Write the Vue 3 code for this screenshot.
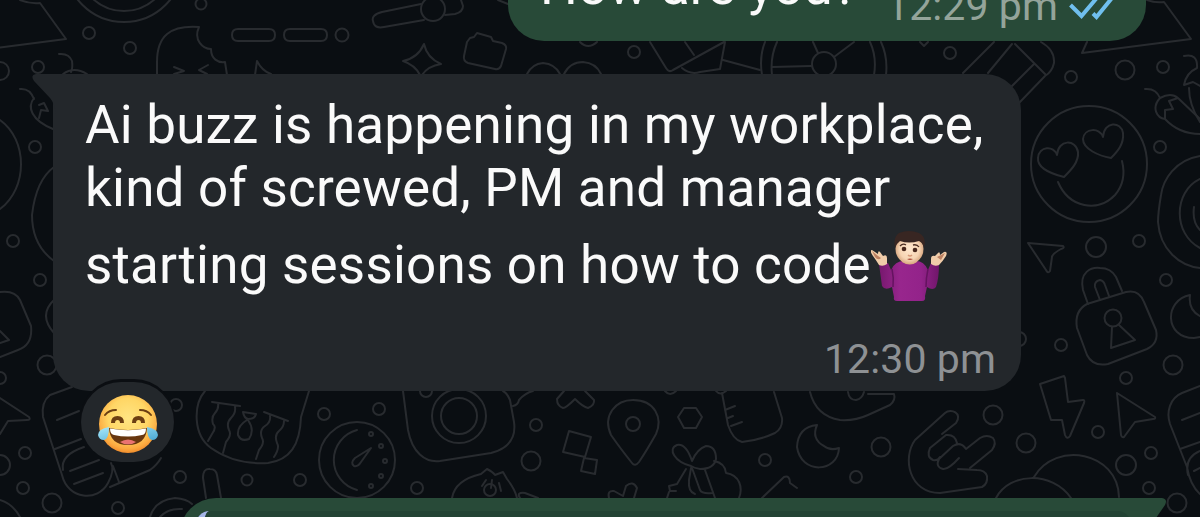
<script setup>
const messageLines = [
  { text: 'Ai buzz is happening in my workplace,', cls: 'line-1' },
  { text: 'kind of screwed, PM and manager', cls: 'line-2' },
  { text: 'starting sessions on how to code', cls: 'line-3', shrug: true }
]

// wallpaper bubbles: x, y, radius
const dots = [
  [201, 4, 5.5], [89, 33, 6], [130, 48, 6], [38, 67, 6], [0, 71, 9], [342, 35, 6.5],
  [433, 9, 12], [634, 52, 6], [824, 64, 12], [950, 53, 6], [1071, 77, 6], [1125, 70, 9.5],
  [1163, 67, 6], [1160, 147, 6], [1096, 247, 10], [1139, 241, 6], [1166, 280, 6],
  [1061, 345, 6], [1173, 365, 9.5], [1126, 378, 6], [1019, 339, 7], [993, 415, 9.5],
  [1026, 443, 9.5], [881, 447, 9.5], [856, 477, 6], [1098, 432, 6], [1126, 465, 10],
  [1151, 453, 6], [1149, 488, 6], [1177, 503, 9.5], [426, 391, 6], [536, 425, 6],
  [531, 461, 9.5], [490, 490, 6], [417, 488, 6], [765, 460, 6], [25, 453, 6],
  [0, 465, 10], [23, 488, 6], [52, 503, 9.5], [118, 508, 6], [180, 477, 6],
  [247, 480, 5.5], [300, 480, 6], [324, 414, 6], [379, 409, 6], [176, 405, 6],
  [0, 378, 6], [47, 365, 9.5], [35, 147, 6], [13, 241, 6], [40, 280, 6],
  [124, -37, 59], [124, -35, 46], [1089, 164, 58], [1113, 318, 8.5],
  [459, 416, 27], [459, 416, 18], [633, 424, 7], [357, 460, 38],
  [371, 434, 2], [381, 446, 2], [385, 461, 2], [381, 476, 2], [371, 486, 2]
]

const doodles = [
  // top strip
  'M20 0Q30 4 40 3L66 39L0 47.5',
  'M59 54Q69 53 72 61Q73 68 71 72M63 74Q74 66 87 74',
  'M20 89Q30 88 34 99M34 98C27 107 31 120 53 129M39 118L41 110L48 111L44 103L39 105',
  'M157 75V62C157 36 170 25 199 27C193 40 203 49 211 49C211 59 218 63 225 62L227 75',
  'M174 67L184 71L174 74M208 65L199 70L207 74',
  'M238 29H269Q275 29 275 35T269 41H238Q232 41 232 35T238 29ZM290 29H321Q327 29 327 35T321 41H290Q284 41 284 35T290 29Z',
  'M255 75L257 61Q262 71 271 74',
  'M421 4L382 12Q371 15 373 21Q374 29 384 27L424 20M445 15L455 14Q463 12 463 6L461 0M498 0L508 4',
  'M424 44Q427 58 441 64Q428 66 422 75M424 44Q418 58 403 61Q415 65 420 75',
  'M470 38L474 37L477 33L491 37L493 41L502 43Q507 45 506 49L501 66Q499 70 495 69L468 63Q463 61 464 56L467 42Z',
  'M527 74Q532 64 543 63Q555 64 560 74M564 74Q570 62 583 62Q596 63 601 74M580 42Q588 50 597 42',
  'M650 42L666 68Q669 73 673 70L724 42M685 42L694 55M682 68Q690 75 700 72L720 69L725 42M723 60L760 70',
  'M765 42Q759 57 762 75M777 42Q770 57 772 75M772 67L811 66M813 42L818 53M834 57L854 42M870 42Q877 57 874 75M881 42Q888 57 886 75',
  'M920 42L924 46L928 42M994 42L963 73M1012 44L988 73M1015 44L1045 74M1034 64L1011 87M1041 42Q1055 50 1054 63Q1052 72 1045 76L1020 102',
  'M1087 42L1082 53L1191 39L1164 2Q1155 3 1147 0',
  // right side
  'M1184 56Q1198 53 1197 68Q1186 73 1184 85L1193 82L1200 86M1189 88Q1189 105 1200 122',
  'M1145 89Q1156 88 1160 98C1151 108 1157 118 1165 119L1165 110L1173 109L1169 101L1178 98Q1171 92 1160 98M1165 119Q1179 134 1200 134M1178 98L1200 119',
  'M1064 177C1052 174 1037 169 1038 158C1039 146 1054 145 1057 155C1058 139 1076 139 1078 152C1079 162 1071 170 1064 177Z',
  'M1111 158C1099 156 1083 149 1083 139C1084 128 1100 127 1103 137C1104 121 1121 121 1123 133C1124 144 1118 151 1111 158Z',
  'M1058 182C1069 208 1098 213 1115 195Q1127 181 1122 161',
  'M1028 243L1063 246Q1065 248 1061 249Q1052 254 1052 257L1050 271Q1048 274 1046 270Z',
  'M1200 156C1175 160 1163 180 1161 195Q1158 213 1158 222C1160 250 1180 266 1200 268M1200 179C1173 192 1173 234 1200 248M1194 207Q1192 222 1200 230',
  'M1087 304L1126 292Q1139 289 1144 302L1156 330Q1159 343 1147 349L1108 364Q1093 367 1087 355L1077 328Q1074 311 1087 304Z',
  'M1088 304L1083 290C1079 272 1091 267 1100 268Q1111 268 1116 277L1122 291M1100 300L1095 287Q1094 281 1100 280Q1104 281 1105 285L1109 296',
  'M1112 327L1111 348L1135 340L1119 325',
  'M1190 295C1164 300 1164 338 1194 338L1200 337M1190 295Q1188 310 1200 316',
  'M1040 384L1064 376L1065 378L1068 402L1083 400Q1085 400 1084 403L1070 436Q1067 440 1065 435L1062 420L1051 420Z',
  'M1117 393L1155 417Q1156 419 1153 419L1135 422L1124 437Q1122 438 1121 435Z',
  'M1200 386L1182 393C1170 398 1166 412 1170 424L1187 467Q1190 485 1200 494M1182 420L1200 413M1180 449L1200 442M1200 451Q1184 458 1188 475M1194 471L1200 468',
  // bottom strip, right to left
  'M942 434L956 423C963 413 951 408 945 413L915 440C902 458 909 493 940 493L982 487Q988 484 987 476Q985 470 977 470L958 469',
  'M970 468L992 450Q997 443 993 438Q987 434 980 438L966 449Q961 441 953 446L939 459Q935 467 943 469Q948 470 959 458M957 443Q955 434 946 435L930 448Q926 457 933 460Q938 461 940 457',
  'M996 498C1010 472 1052 471 1071 498M1034 477C1056 440 1118 452 1119 497',
  'M817 425Q798 427 797 447C801 475 838 473 839 448Q830 451 824 446Q811 439 817 425Z',
  'M810 392Q816 416 840 420Q855 421 868 415L890 405Q896 400 894 394L868 394M848 392Q849 400 856 400Q862 399 864 392',
  'M762 498L784 477Q790 475 790 483L797 488M665 391Q670 397 676 391',
  'M722 393L728 425Q733 440 742 442Q760 440 775 433Q783 428 782 418L774 392M725 410L735 406M728 418L733 416M731 426L742 422M716 391Q720 396 726 391',
  'M678 417L684 408L696 408L702 417L696 428L684 428Z',
  'M691 466C675 462 667 449 677 445Q686 443 692 461Q697 449 706 446Q716 446 716 459Q714 469 700 469Q694 468 691 466',
  'M691 468L689 480Q688 492 695 494M705 470L715 498M692 468L700 490Q702 494 712 493M714 461Q725 463 726 473C740 475 743 488 739 498M686 469L677 484L669 486L670 491H676M669 492L667 498',
  'M632 463Q620 448 611 435C602 415 616 400 633 400C655 400 663 418 656 434Q647 450 639 462Q635 467 632 463Z',
  'M569 431L591 437L585 457L563 452ZM584 458L597 460L595 474L581 471Z',
  'M564 391L557 399Q557 406 563 408Q566 408 575 399Q583 407 588 408Q595 405 594 400L585 391',
  'M609 498Q607 490 614 491L623 496L626 486Q633 480 637 488L634 498',
  'M452 498Q455 480 481 474L487 469Q493 472 495 475L503 472L507 479Q515 489 517 498M486 480L482 486M492 480L491 488M499 483L501 491M520 498Q516 492 525 493L538 498',
  'M403 391L408 430C412 452 425 463 440 461L491 453C510 448 516 436 514 422L510 400Q507 393 503 391M513 406Q518 405 519 400Q525 393 533 391',
  'M357 430A31 31 0 0 0 357 490M371 448L355 458Q350 463 354 466Q358 467 361 462Z',
  'M205 391C193 405 193 435 211 448Q235 465 268 463C290 460 300 445 301 417L309 391',
  'M212 402L240 406M218 403Q219 409 215 413T213 424Q217 427 212 434L208 441M235 407Q236 413 231 418T229 430Q232 435 226 442L223 453M264 412L288 421M270 416Q271 422 265 426T262 438Q265 443 259 450L256 459M284 421Q284 427 279 431T277 443Q280 448 274 457',
  'M243 412L256 414Q255 419 248 419Q244 418 243 412ZM247 420Q237 426 238 435Q241 442 249 439Q255 430 248 420',
  'M206 498L203 478Q203 468 210 469Q216 469 217 475L221 498M150 517Q155 500 175 498Q187 499 192 504M160 517Q168 508 182 509',
  'M72 387L50 395Q41 402 43 417L62 475C68 500 98 502 108 483Q115 470 111 463M110 487L150 470Q157 465 161 458M57 420L79 411M55 449L81 439M70 471L99 460M74 484L103 473M63 470Q60 455 84 447M113 466L119 482',
  'M0 398L29 417Q31 420 27 420L8 421L0 434M0 500Q13 504 20 517',
  // left side
  'M0 120C28 140 28 188 0 209M54 167Q36 180 32 215Q32 245 54 261M54 300Q38 315 54 333',
  'M0 292Q15 290 20 300L31 326Q33 345 18 350L0 357M0 331L9 340L0 343'
]
</script>

<template>
  <div class="chat">
    <svg class="wallpaper" viewBox="0 0 1200 517">
      <circle v-for="(d, i) in dots" :key="'c' + i" :cx="d[0]" :cy="d[1]" :r="d[2]" />
      <path v-for="(p, i) in doodles" :key="'p' + i" :d="p" />
    </svg>

    <div class="bubble sent first">
      <span class="sent-text">How are you?</span>
      <span class="time sent-time">12:29 pm</span>
      <svg class="ticks" viewBox="0 0 46 30">
        <path d="M2.5 15L13.5 26L33 3M25 23.500L28.500 27L48 3" />
      </svg>
    </div>

    <div class="bubble received">
      <svg class="tail" viewBox="0 0 24 40">
        <path d="M4 0H24V40Q23 30 18 24L2 7Q-2 1 4 0Z" />
      </svg>
      <p v-for="line in messageLines" :key="line.cls" class="line" :class="line.cls">
        <span>{{ line.text }}</span>
        <svg v-if="line.shrug" class="shrug" viewBox="0 0 76 76">
          <defs>
            <linearGradient id="shirt" x1="0" x2="1">
              <stop offset="0" stop-color="#76186d" />
              <stop offset=".35" stop-color="#98268d" />
              <stop offset=".7" stop-color="#93238a" />
              <stop offset="1" stop-color="#70166a" />
            </linearGradient>
            <radialGradient id="skin">
              <stop offset="0" stop-color="#ffe7cd" />
              <stop offset=".7" stop-color="#f6d4b3" />
              <stop offset="1" stop-color="#d9aa84" />
            </radialGradient>
          </defs>
          <path d="M8 34L17 33L20 40Q24 31 33 31H45Q53 31 57 40L60 33L68 34Q68 48 65 57Q62 61 56 57L54 66Q55 71 51 71H26Q22 71 23 67L21 57Q14 61 11 56Z" fill="url(#shirt)" />
          <path d="M21 39Q23 48 22 57M57 39Q55 48 55 57" fill="none" stroke="#651360" stroke-width="1.500" />
          <path d="M31 27H46V32Q39 37 31 32Z" fill="#dca982" />
          <path d="M8 35Q5 30 2 26Q-2 20 1 20L7 24Q7 20 9 22L12 26Q16 24 16 28L16 34Q12 37 8 35Z" fill="#f0cca9" />
          <path d="M68 35Q72 31 75 26Q77 21 73 22L69 25Q69 21 67 23L64 26Q60 25 60 29L60 34Q64 37 68 35Z" fill="#f0cca9" />
          <path d="M1 21L7 26L10 28Q7 31 4 27ZM66 27L74 23L70 30Z" fill="#bb8062" />
          <ellipse cx="38.500" cy="19" rx="14" ry="15" fill="url(#skin)" />
          <path d="M24 18Q22 7 28 3Q38-1 48 3Q56 7 53 18Q52 13 48 11Q38 14 29 11Q26 13 24 18Z" fill="#382622" />
          <circle cx="33" cy="19" r="2.300" fill="#49281d" />
          <circle cx="44" cy="20" r="2.300" fill="#49281d" />
          <path d="M29 16Q32 13 35 15M42 15Q46 14 48 17" fill="none" stroke="#4b2d22" stroke-width="1.300" />
          <path d="M37 25Q39 27 41 25" fill="none" stroke="#d79b79" stroke-width="1.500" />
          <path d="M36 29Q39 28 42 29Q39 31 36 29Z" fill="#a94b3c" />
        </svg>
      </p>
      <div class="meta"><span class="time">12:30 pm</span></div>

      <div class="reaction">
        <svg class="joy" viewBox="0 0 60 60">
          <defs>
            <radialGradient id="face" cx=".5" cy=".4" r=".62">
              <stop offset="0" stop-color="#ffe583" />
              <stop offset=".55" stop-color="#ffd665" />
              <stop offset=".85" stop-color="#fba940" />
              <stop offset="1" stop-color="#ee8527" />
            </radialGradient>
            <linearGradient id="tear" x1="0" y1="0" x2="1" y2="1">
              <stop offset="0" stop-color="#a8e8fb" />
              <stop offset="1" stop-color="#4ba9d3" />
            </linearGradient>
          </defs>
          <circle cx="30" cy="30" r="29" fill="url(#face)" />
          <g fill="none" stroke="#6b3e12" stroke-linecap="round">
            <path d="M7 21Q11 16 18 16M42 16Q49 16 53 21" stroke-width="2" />
            <path d="M15 29Q15 24 19.500 24Q24 24 24 29M36 29Q36 24 40.500 24Q45 24 45 29" stroke-width="4" stroke-linecap="butt" />
          </g>
          <path d="M11 34Q30 38 49 34Q48 51 30 51Q12 51 11 34Z" fill="#67360f" />
          <path d="M12 34.500Q30 38 48 34.500Q48 41 44 41Q30 44 16 41Q12 40 12 34.500Z" fill="#fff" />
          <path d="M22 48Q30 43 38 48Q30 53 22 48Z" fill="#ea7371" />
          <path d="M11 33Q0 35 0 41Q1 46 6 46Q11 45 11 33ZM49 33Q60 35 60 41Q59 46 54 46Q49 45 49 33Z" fill="url(#tear)" />
        </svg>
      </div>
    </div>

    <div class="bubble sent last">
      <div class="quote"></div>
      <svg class="tail tail-right" viewBox="0 0 24 20">
        <path d="M0 0H18Q24 1 21 7L12 20H0Z" />
      </svg>
    </div>
  </div>
</template>

<style>
body {
  margin: 0;
  background: #0a0e12;
}
</style>

<style scoped>
.chat {
  position: relative;
  display: flex;
  flex-direction: column;
  box-sizing: border-box;
  width: 1200px;
  height: 517px;
  overflow: hidden;
  background: #0a0e12;
  color: #fafafa;
  font-family: Roboto, "Noto Sans", sans-serif;
}

.wallpaper {
  position: absolute;
  inset: 0;
  width: 1200px;
  height: 517px;
  fill: none;
  stroke: #282b2f;
  stroke-width: 2;
  stroke-linejoin: round;
  stroke-linecap: round;
}

.bubble {
  position: relative;
  box-sizing: border-box;
  flex-shrink: 0;
}

.sent {
  background: #284a38;
}

.first {
  display: flex;
  align-items: flex-end;
  width: 638px;
  height: 41px;
  margin-left: 508px;
  padding-left: 32px;
  border-radius: 0 0 36px 36px;
}

.sent-text {
  width: 346px;
  flex-shrink: 0;
  font-size: 53px;
  line-height: 60px;
  margin-bottom: 25px;
  letter-spacing: 0;
  white-space: nowrap;
}

.time {
  color: #8e9194;
  font-size: 41px;
  line-height: 48px;
  letter-spacing: 0.1px;
  white-space: nowrap;
}

.sent-time {
  width: 182px;
  flex-shrink: 0;
  margin-bottom: 11px;
  color: #94a49a;
}

.ticks {
  flex-shrink: 0;
  width: 46px;
  height: 30px;
  margin-bottom: 21px;
  fill: none;
  stroke: #70bfee;
  stroke-width: 4;
}

.received {
  width: 968px;
  height: 317px;
  margin: 33px 0 0 53px;
  padding: 20px 25px 0 32px;
  border-radius: 0 36px 36px 36px;
  background: #23272b;
}

.tail {
  position: absolute;
  top: 0;
  left: -21px;
  width: 24px;
  height: 40px;
  fill: #23272b;
}

.line {
  display: flex;
  align-items: center;
  margin: 0;
  height: 63px;
  font-size: 53px;
  line-height: 63px;
  letter-spacing: 0.2px;
  white-space: nowrap;
}

.line-3 {
  height: 90px;
}

.shrug {
  width: 76px;
  height: 76px;
  margin-top: 6px;
}

.meta {
  display: flex;
  justify-content: flex-end;
  margin-top: 25px;
}

.reaction {
  position: absolute;
  left: 28px;
  top: 308px;
  display: flex;
  align-items: center;
  justify-content: center;
  box-sizing: border-box;
  width: 93px;
  height: 80px;
  padding-top: 4px;
  border-radius: 42px;
  background: #23272b;
  box-shadow: 0 -2px 0 1px #0b0e12;
}

.joy {
  width: 60px;
  height: 60px;
}

.last {
  width: 966px;
  height: 40px;
  margin: 107px 0 0 180px;
  padding: 13px 15px 0 16px;
  border-radius: 36px 0 0 0;
}

.quote {
  height: 27px;
  border-left: 8px solid #a5b5e8;
  border-radius: 16px;
  background: #234334;
}

.tail-right {
  left: auto;
  right: -22px;
  height: 20px;
  fill: #284a38;
}
</style>
